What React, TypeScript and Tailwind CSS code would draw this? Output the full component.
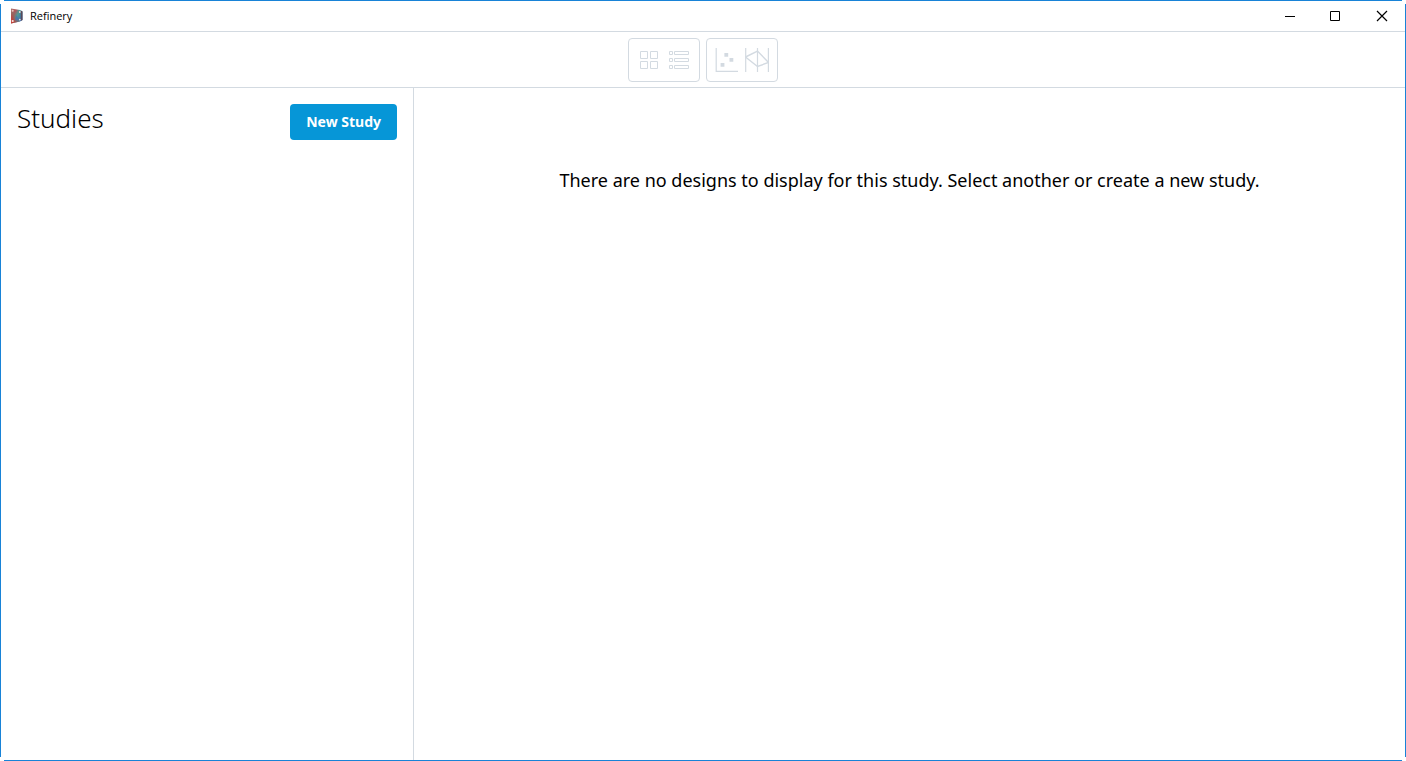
import type { ReactNode } from "react";

function AppLogo() {
  return (
    <svg width="14" height="16" viewBox="0 0 14 16" aria-hidden="true">
      <defs>
        <linearGradient id="front" x1="0" y1="0" x2="1" y2="0.6">
          <stop offset="0" stopColor="#a8746c" />
          <stop offset="0.35" stopColor="#b0555a" />
          <stop offset="0.6" stopColor="#4f9a94" />
          <stop offset="1" stopColor="#3a6fb5" />
        </linearGradient>
        <linearGradient id="glow" x1="0" y1="1" x2="0.7" y2="0.2">
          <stop offset="0" stopColor="#cf3a30" />
          <stop offset="0.4" stopColor="#b8453f" stopOpacity="0.8" />
          <stop offset="1" stopColor="#3fa08c" stopOpacity="0" />
        </linearGradient>
      </defs>
      <path d="M1 0.5L10 2L12.5 3.5V12L10 13.5L1 15.5Z" fill="url(#front)" />
      <path d="M1 4L10 3V13.5L1 15.5Z" fill="url(#glow)" />
      <path d="M10.8 2.4L12.5 3.5V12L10.8 13Z" fill="#5a4a58" />
      <path d="M6 7L10 12L5 12.5Z" fill="#3d6fc0" fillOpacity="0.6" />
      <circle cx="2.7" cy="2.8" r="1" fill="#e8c8c0" />
      <circle cx="9.8" cy="4" r="0.9" fill="#f6d8d2" />
      <circle cx="2.7" cy="13" r="1.1" fill="#fbe3df" />
      <circle cx="9.8" cy="11.6" r="0.9" fill="#f0dade" />
    </svg>
  );
}

function GridIcon() {
  return (
    <svg width="24" height="24" viewBox="0 0 24 24" fill="none" stroke="currentColor" aria-hidden="true">
      <path d="M3.5 3.5h7v7h-7zM13.5 3.5h7v7h-7zM3.5 13.5h7v7h-7zM13.5 13.5h7v7h-7z" />
    </svg>
  );
}

function ListIcon() {
  return (
    <svg width="24" height="24" viewBox="0 0 24 24" fill="none" stroke="currentColor" aria-hidden="true">
      <path d="M2.5 3.5h3v3h-3zM7.5 3.5h14v3h-14zM2.5 10.5h3v3h-3zM7.5 10.5h14v3h-14zM2.5 17.5h3v3h-3zM7.5 17.5h14v3h-14z" />
    </svg>
  );
}

function ScatterIcon() {
  return (
    <svg width="24" height="24" viewBox="0 0 24 24" fill="none" stroke="currentColor" aria-hidden="true">
      <path d="M1.2 0V23.3H23" strokeWidth="1.2" />
      <path d="M9.4 5h3.8v3.8h-3.8zM14.5 10h3.8v3.8h-3.8zM5.6 15h3.8v3.8h-3.8z" fill="currentColor" stroke="none" />
    </svg>
  );
}

function ParallelIcon() {
  return (
    <svg width="24" height="24" viewBox="0 0 24 24" fill="none" stroke="currentColor" aria-hidden="true">
      <path d="M0.7 0V24M12.5 0V24M23.4 0V24" strokeWidth="1.2" />
      <path d="M0.5 9L12.5 3L23.5 14.5L12.5 18.5L0.5 9" strokeWidth="1.4" />
    </svg>
  );
}

function ToolGroup({ label, children }: { label: string; children: ReactNode }) {
  return (
    <div role="group" aria-label={label} className="flex h-11 w-18 items-center justify-center gap-1.5 rounded border border-[#d3dae1] text-[#d3dae1]">
      {children}
    </div>
  );
}

function WindowButton({ label, children }: { label: string; children: ReactNode }) {
  return (
    <button type="button" aria-label={label} className="flex h-full w-[46px] items-center justify-center text-black">
      <svg width="12" height="12" viewBox="0 0 12 12" fill="none" stroke="currentColor" aria-hidden="true">
        {children}
      </svg>
    </button>
  );
}

export default function App() {
  return (
    <div className="grid min-h-screen grid-cols-[1px_1fr_1px] grid-rows-[1px_1fr_1px] bg-white font-['Noto_Sans',sans-serif] text-black">
      <div className="col-span-3 mx-1 bg-[#1883d7]" />
      <div className="my-[3px] bg-[#1883d7]" />
      <div className="flex min-w-0 flex-col">
        <header className="flex h-[31px] items-center justify-between border-b border-[#d3dae1]">
          <div className="flex items-center gap-1.5 pl-[9px]">
            <AppLogo />
            <span className="font-['Open_Sans',sans-serif] text-[11px] leading-4">Refinery</span>
          </div>
          <div className="flex h-7 items-center">
            <WindowButton label="Minimize">
              <path d="M1 6.5h10" />
            </WindowButton>
            <WindowButton label="Maximize">
              <path d="M0.5 1.5h9v9h-9z" />
            </WindowButton>
            <WindowButton label="Close">
              <path d="M1 1l10 10M11 1l-10 10" strokeWidth="1.2" />
            </WindowButton>
          </div>
        </header>

        <div className="flex h-14 items-center justify-center gap-1.5 border-b border-[#d3dae1]">
          <ToolGroup label="Design layout">
            <button type="button" aria-label="Grid view"><GridIcon /></button>
            <button type="button" aria-label="List view"><ListIcon /></button>
          </ToolGroup>
          <ToolGroup label="Charts">
            <button type="button" aria-label="Scatter plot"><ScatterIcon /></button>
            <button type="button" aria-label="Parallel coordinates"><ParallelIcon /></button>
          </ToolGroup>
        </div>

        <div className="flex flex-1">
          <aside className="w-[413px] shrink-0 border-r border-[#d3dae1] p-4">
            <div className="flex items-start justify-between">
              <h1 className="text-[26px] leading-7 font-light">Studies</h1>
              <button type="button" className="h-9 rounded bg-[#0696d7] px-4 text-[14px] leading-5 font-bold text-white">
                New Study
              </button>
            </div>
          </aside>
          <main className="flex-1 px-4 pt-20 text-center">
            <p className="text-[18px] leading-6">
              There are no designs to display for this study. Select another or create a new study.
            </p>
          </main>
        </div>
      </div>
      <div className="my-[3px] bg-[#1883d7]" />
      <div className="col-span-3 mx-1 bg-[#1883d7]" />
    </div>
  );
}
